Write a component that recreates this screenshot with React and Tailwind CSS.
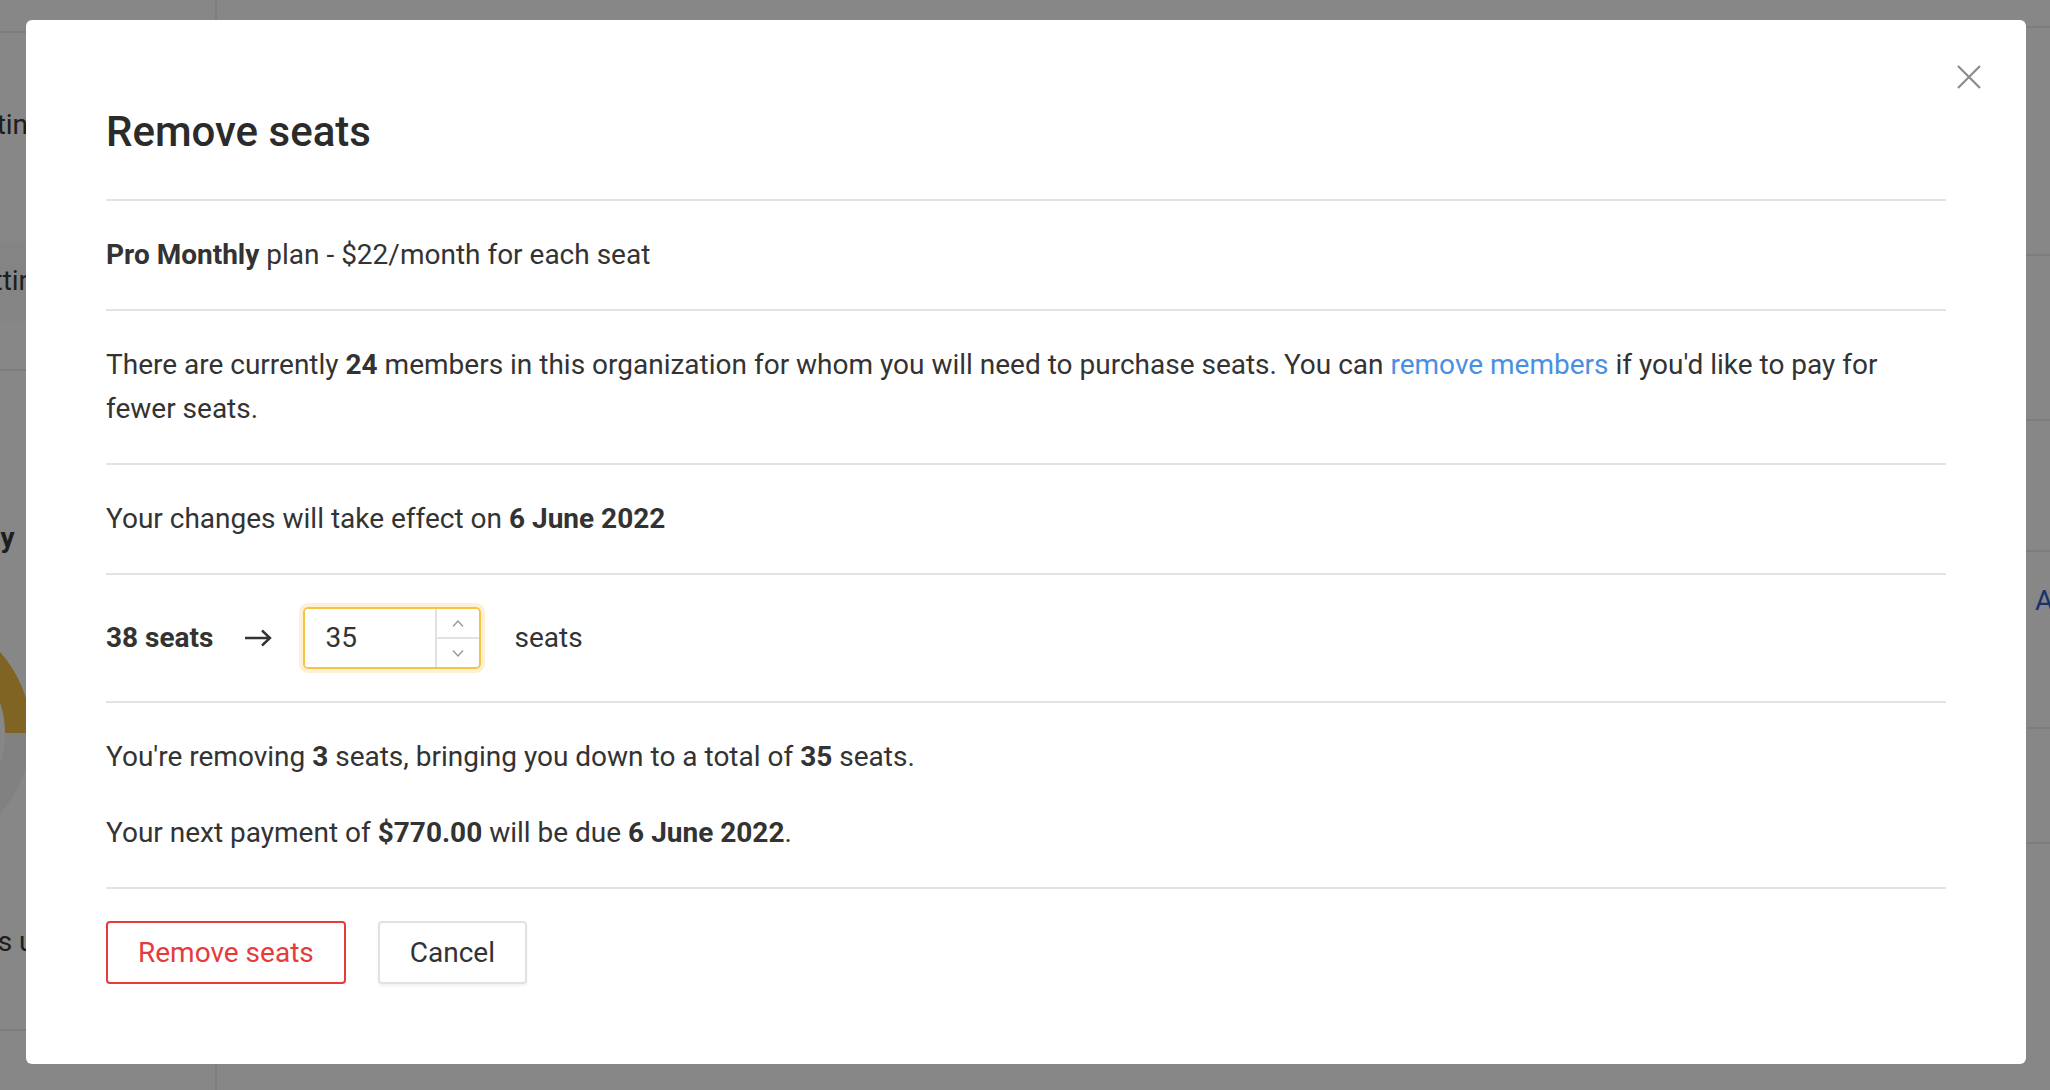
import { useState } from "react";

function Chevron({ up }) {
  return (
    <svg width="12" height="7" viewBox="0 0 12 7" fill="none" stroke="#9a9a9a" strokeWidth="1.4">
      {up ? <path d="M1 6.5 6 1l5 5.5" /> : <path d="M1 .5 6 6l5-5.5" />}
    </svg>
  );
}

function SeatInput({ value, onChange }) {
  return (
    <div className="flex h-[62px] w-[178px] overflow-hidden rounded-[5px] border-2 border-[#f5c445] ring-4 ring-[#fdf0d3]">
      <input
        value={value}
        onChange={(e) => onChange(e.target.value)}
        className="w-0 flex-1 bg-white pl-[20px] text-[28px] text-[#333] outline-none"
      />
      <div className="flex w-[44px] flex-col border-l-2 border-[#e2e2e2]">
        <button className="flex flex-1 items-center justify-center border-b-2 border-[#e2e2e2]" onClick={() => onChange(String(Number(value) + 1))}>
          <Chevron up />
        </button>
        <button className="flex flex-1 items-center justify-center" onClick={() => onChange(String(Number(value) - 1))}>
          <Chevron />
        </button>
      </div>
    </div>
  );
}

function Background() {
  return (
    <div className="flex h-full text-[28px] text-[#3a3a3a]">
      <aside className="flex w-[217px] shrink-0 flex-col border-r-2 border-[#ececec]">
        <div className="h-[33px] border-b-2 border-[#ececec]" />
        <div className="ml-[-44px] pt-[74px] leading-[36px]">Settings</div>
        <div className="mt-[98px] flex h-[80px] items-center bg-[#fafafa]">
          <span className="ml-[-38px]">Settings</span>
        </div>
        <div className="mt-[48px] border-b-2 border-[#ececec]" />
        <div className="ml-[-88px] mt-[146px] font-bold">Monthly</div>
        <svg width="300" height="300" viewBox="0 0 300 300" className="ml-[-240px] mt-[24px]">
          <circle cx="150" cy="150" r="108" fill="none" stroke="#f4f4f4" strokeWidth="26" />
          <path d="M150 42 A108 108 0 0 1 258 150" fill="none" stroke="#f0bd42" strokeWidth="26" />
        </svg>
        <div className="ml-[-56px] mt-[38px] whitespace-nowrap">seats used</div>
        <div className="mt-[66px] border-b-2 border-[#ececec]" />
      </aside>
      <main className="flex flex-1 flex-col">
        <div className="h-[28px] border-b-2 border-[#ececec]" />
        <div className="h-[228px] border-b-2 border-[#ececec]" />
        <div className="h-[165px] border-b-2 border-[#ececec]" />
        <div className="h-[131px] border-b-2 border-[#ececec]" />
        <div className="h-[177px] border-b-2 border-[#ececec] pl-[1818px] pt-[28px] whitespace-nowrap">
          <span className="text-[#2f5fd0]">Add seats</span>
        </div>
        <div className="h-[115px] border-b-2 border-[#ececec]" />
      </main>
    </div>
  );
}

export default function App() {
  const [seats, setSeats] = useState("35");
  const removing = 38 - Number(seats || 0);

  return (
    <div className="relative h-[1090px] w-full overflow-hidden bg-white font-['Roboto','Liberation_Sans',sans-serif]">
      <Background />

      <div className="absolute inset-0 bg-black/[0.47] pl-[26px] pr-[24px] pt-[20px]">
        <div className="relative rounded-[6px] bg-white px-[80px] pb-[80px] pt-[88px] text-[28px] leading-[44px] text-[#333]">
          <button className="absolute right-[44px] top-[44px] p-0">
            <svg width="26" height="26" viewBox="0 0 26 26" stroke="#8c8c8c" strokeWidth="2.2">
              <path d="M2 2l22 22M24 2 2 24" />
            </svg>
          </button>

          <h2 className="mb-[43px] text-[42px] font-medium leading-[48px] text-[#2b2b2b]">Remove seats</h2>

          <div className="border-t-2 border-[#e3e3e3] py-8">
            <b className="font-bold">Pro Monthly</b> plan - $22/month for each seat
          </div>

          <div className="border-t-2 border-[#e3e3e3] py-8">
            There are currently <b className="font-bold">24</b> members in this organization for whom you will need to
            purchase seats. You can <a className="text-[#4a90e2]" href="#">remove members</a> if you'd like to pay for
            fewer seats.
          </div>

          <div className="border-t-2 border-[#e3e3e3] py-8">
            Your changes will take effect on <b className="font-bold">6 June 2022</b>
          </div>

          <div className="flex items-center border-t-2 border-[#e3e3e3] py-8">
            <b className="font-bold">38 seats</b>
            <svg width="28" height="18" viewBox="0 0 28 18" fill="none" stroke="#333" strokeWidth="2.4" className="ml-[31px] mr-[31px]">
              <path d="M1 9h25M18 1.5 26 9l-8 7.5" />
            </svg>
            <SeatInput value={seats} onChange={setSeats} />
            <span className="ml-[33px]">seats</span>
          </div>

          <div className="border-t-2 border-[#e3e3e3] py-8">
            <p>
              You're removing <b className="font-bold">{removing}</b> seats, bringing you down to a total of{" "}
              <b className="font-bold">{seats}</b> seats.
            </p>
            <p className="mt-[32px]">
              Your next payment of <b className="font-bold">$770.00</b> will be due <b className="font-bold">6 June 2022</b>.
            </p>
          </div>

          <div className="flex gap-[32px] border-t-2 border-[#e3e3e3] pt-8">
            <button className="h-[63px] rounded-[4px] border-2 border-[#e53b3b] bg-white px-[30px] text-[28px] text-[#e53b3b]">
              Remove seats
            </button>
            <button className="h-[63px] rounded-[4px] border-2 border-[#e2e2e2] bg-white px-[30px] text-[28px] text-[#333] shadow-[0_2px_3px_rgba(0,0,0,0.06)]">
              Cancel
            </button>
          </div>
        </div>
      </div>
    </div>
  );
}
